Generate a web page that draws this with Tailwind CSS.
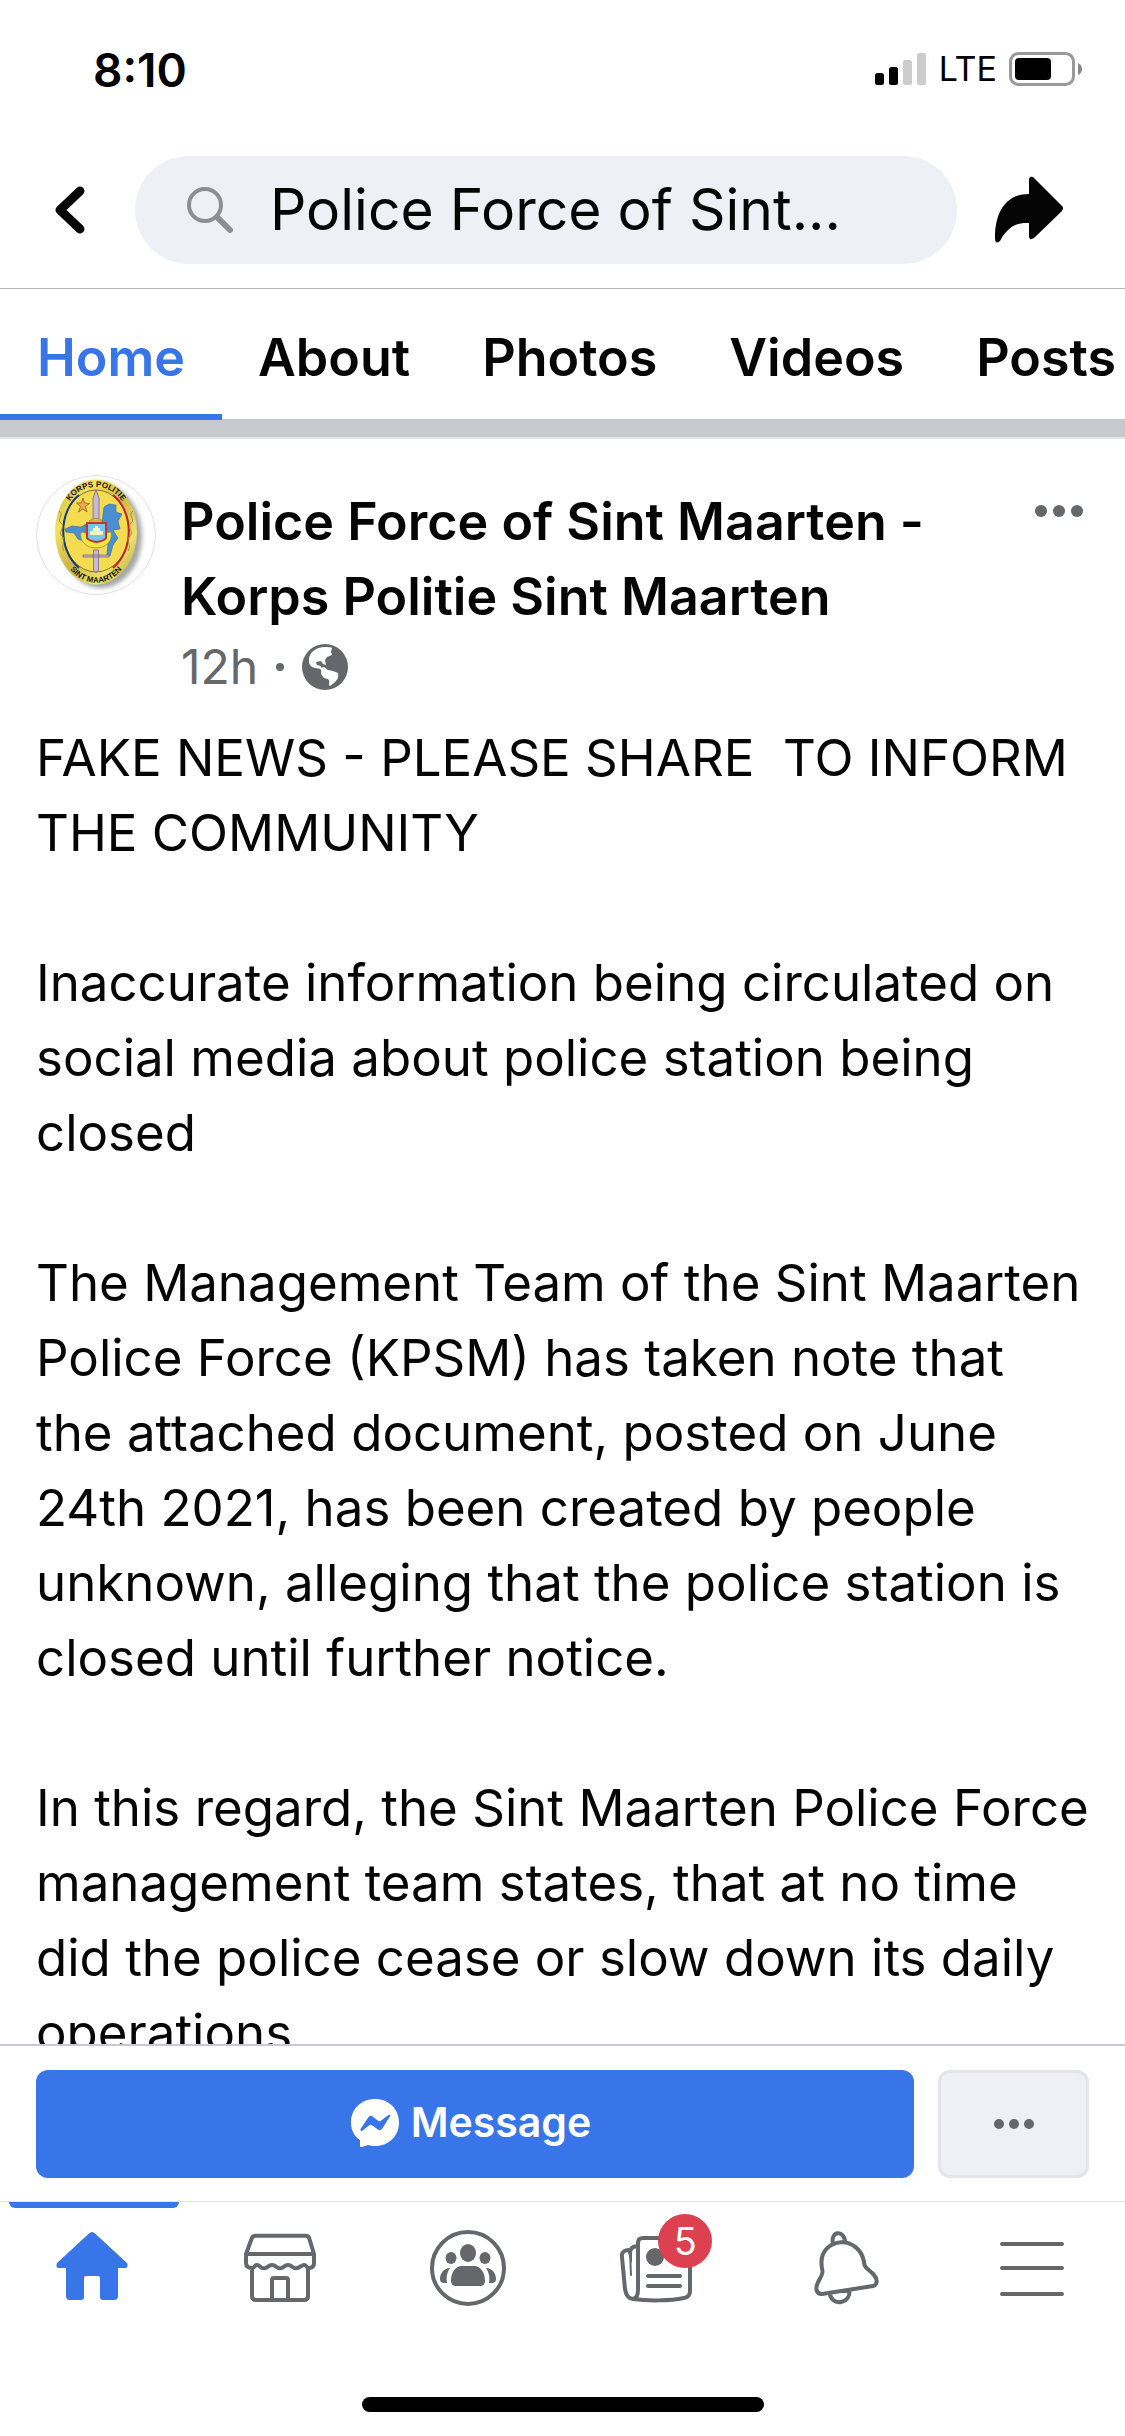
<!DOCTYPE html>
<html lang="en">
<head>
<meta charset="utf-8">
<meta name="viewport" content="width=device-width, initial-scale=1">
<title>Police Force of Sint Maarten</title>
<script src="https://cdn.jsdelivr.net/npm/@tailwindcss/browser@4"></script>
</head>
<body class="flex h-screen flex-col overflow-hidden bg-white font-['Inter',sans-serif] text-[#050505]">

  <!-- Status bar -->
  <div class="flex h-[132px] shrink-0 items-start justify-between pt-10 pr-[42px] pl-[93px] text-black">
    <time class="text-[46px] leading-[60px] font-semibold">8:10</time>
    <div class="flex h-[58px] items-center gap-3">
      <svg class="h-[34px] w-[52px]" viewBox="0 0 52 34" aria-label="Signal strength" role="img">
        <rect x="0" y="21" width="9" height="12" rx="2.5"/><rect x="14" y="15" width="9" height="18" rx="2.5"/>
        <rect x="28" y="8" width="9" height="25" rx="2.5" fill="#ccc"/><rect x="42" y="1" width="9" height="32" rx="2.5" fill="#ccc"/>
      </svg>
      <span class="text-[34px] leading-[60px]">LTE</span>
      <svg class="h-[34px] w-[74px]" viewBox="0 0 74 34" aria-label="Battery" role="img">
        <rect x="1.5" y="1.5" width="63" height="31" rx="8" fill="none" stroke="#999" stroke-width="3"/>
        <rect x="6" y="6" width="36" height="22" rx="4"/><path d="M69 11q4 2 4 6t-4 6z" fill="#888"/>
      </svg>
    </div>
  </div>

  <!-- Search header -->
  <header class="flex shrink-0 items-center border-b border-[#b4b6bb] pt-6 pb-6">
    <button class="flex w-[135px] justify-start pl-[54px]" aria-label="Back">
      <svg class="h-12 w-8" viewBox="0 0 32 48" fill="none" stroke="#050505" stroke-width="9" stroke-linecap="round" stroke-linejoin="round"><path d="M26 5 6 24l20 19"/></svg>
    </button>
    <label class="flex h-[108px] min-w-0 flex-1 items-center gap-9 rounded-full bg-[#eff0f5] pl-[51px]">
      <svg class="h-12 w-12 shrink-0" viewBox="0 0 48 48" fill="none" stroke="#8c8e92"><circle cx="19" cy="19" r="16" stroke-width="4"/><path d="m31 31 13 13" stroke-width="6" stroke-linecap="round"/><path d="m29 30 5 5" stroke-width="4"/></svg>
      <input class="min-w-0 flex-1 bg-transparent text-[57px] leading-[72px] outline-none" type="text" aria-label="Search" value="Police Force of Sint...">
    </label>
    <button class="flex w-[168px] justify-start pl-[38px]" aria-label="Share">
      <svg class="h-[68px] w-[69px]" viewBox="0 0 69 68" fill="#050505"><path d="M34 18V4q0-4 4-3L67 30q2 2 0 5L39 62q-5 3-5-2V47C21 46 12 52 5 65q-5 4-5-3C0 36 11 18 34 18z"/></svg>
    </button>
  </header>

  <!-- Page tabs -->
  <nav class="flex shrink-0 overflow-hidden bg-[#c8c9ce] text-[52px] leading-[66px] font-semibold" aria-label="Page sections">
    <a href="#" class="h-[131px] border-b-6 border-[#3875e8] bg-white px-[37px] pt-9 text-[#3875e8]" aria-current="page">Home</a>
    <a href="#" class="h-[130px] bg-white px-9 pt-9">About</a>
    <a href="#" class="h-[130px] bg-white px-9 pt-9">Photos</a>
    <a href="#" class="h-[130px] bg-white px-9 pt-9">Videos</a>
    <a href="#" class="h-[130px] bg-white px-9 pt-9">Posts</a>
  </nav>
  <div class="h-[19px] shrink-0 border-b-2 border-[#e4e5ea] bg-[#c8c9ce]"></div>

  <!-- Post -->
  <main class="min-h-0 flex-1 overflow-hidden px-9 pt-9">
    <article>
      <div class="flex items-start gap-[25px]">
        <svg class="h-[120px] w-[120px] shrink-0" viewBox="0 0 120 120" role="img" aria-label="Police force crest">
          <defs>
            <linearGradient id="gold" x1="0" y1="0" x2="1" y2="1"><stop offset="0" stop-color="#b9a13c"/><stop offset=".25" stop-color="#f3e25c"/><stop offset=".5" stop-color="#cdb646"/><stop offset=".75" stop-color="#efe16b"/><stop offset="1" stop-color="#a8923a"/></linearGradient>
            <filter id="soft" x="-20%" y="-20%" width="140%" height="140%"><feGaussianBlur stdDeviation="2"/></filter>
            <path id="arcTop" d="M31 33C40 5 80 5 89 33"/>
            <path id="arcBottom" d="M27 80C38 117 82 117 93 80"/>
          </defs>
          <circle cx="60" cy="60" r="59.5" fill="#fff" stroke="#e2e2e4"/>
          <ellipse cx="65" cy="61" rx="41" ry="52" fill="#777" opacity=".65" filter="url(#soft)"/>
          <ellipse cx="60" cy="57" rx="41" ry="52.500" fill="url(#gold)"/>
          <ellipse cx="60" cy="56" rx="33" ry="41" fill="#f4dc50" stroke="#80702c"/>
          <path d="M43 20C22 37 22 75 43 93" fill="none" stroke="#173a78" stroke-width="2"/>
          <path d="M77 20c21 17 21 55 0 73" fill="none" stroke="#c2202c" stroke-width="2"/>
          <path d="M23 36c6 4-3 8 2 12s-4 9 1 13-2 9 2 15M97 36c-6 4 3 8-2 12s4 9-1 13 2 9-2 15" fill="none" stroke="#a39138"/>
          <path d="m68 32 5-3 7 1v7l6 2-4 7 2 8-7 1 5 8-5 7-3 11-3-1 1-13-7-12zM29 54l7-3 9 1 5-3v18l-8-3-4-6-8-1z" fill="#4a8fd2" stroke="#41649a" stroke-width=".6"/>
          <path d="m47 23 1.500 5 5 .5-4 3 1.500 5.500-4-3-4.500 3 2-5.500-4-3.500 5-.2z" fill="#f0a94d" stroke="#7b542a" stroke-width=".7"/>
          <path d="m60 15 3 8v22h-6V23zM57.500 75h5v20q-2.500 4-5 0zM47 80h26v2H47z" fill="#c9b9d8" stroke="#756688" stroke-width=".8"/>
          <path d="M45 57c-2 9 5 16 15 16s17-7 15-16l-5 1c0 5-4 9-10 9s-10-4-10-9z" fill="#f3e642" stroke="#9a8530" stroke-width=".7"/>
          <path d="M53 46q7-5 14 0z" fill="#e8c836" stroke="#8c7626" stroke-width=".6"/>
          <path d="M51 48h19v15q-2 3-9.500 4-7.500-1-9.500-4z" fill="#75c7e5" stroke="#c8342d" stroke-width="2"/>
          <path d="M54 60v-4h3v-3h2v-2h3v2h2v3h3v4z" fill="#f7f2c4"/>
          <g class="font-['Liberation_Sans',sans-serif] text-[8px] font-bold" fill="#17150a">
            <text text-anchor="middle"><textPath href="#arcTop" startOffset="50%">KORPS POLITIE</textPath></text>
            <text text-anchor="middle"><textPath href="#arcBottom" startOffset="50%">SINT MAARTEN</textPath></text>
          </g>
        </svg>
        <div class="min-w-0 flex-1 pt-[9px]">
          <h1 class="text-[52px] leading-[75px] font-semibold">Police Force of Sint Maarten -<br>Korps Politie Sint Maarten</h1>
          <div class="flex h-[66px] items-center text-[48px] leading-[66px] text-[#65676b]">
            <a href="#">12h</a>
            <span class="mx-[18px] size-2 rounded-full bg-[#65676b]"></span>
            <svg class="size-[46px]" viewBox="0 0 46 46" role="img" aria-label="Public"><circle cx="23" cy="23" r="23" fill="#65676b"/><path d="M7 17C6 9 14 3 23 3q6 0 7 1l-1 4 1 3-5 2-2 3 1 5-3-1-2-3-5 1 1 3 4 1v3l-6-1C9 23 7 21 7 17zM18 24l4-1 4 3 5 1 5 2c1 5-1 7-4 10l-4 3-1-1c1-5 0-6-5-7l-3-4q1-3-1-6z" fill="#fff"/></svg>
          </div>
        </div>
        <button class="pt-[30px] pr-1.5" aria-label="Post options">
          <svg class="h-3 w-12" viewBox="0 0 48 12" fill="#65676b"><circle cx="6" cy="6" r="6"/><circle cx="24" cy="6" r="6"/><circle cx="42" cy="6" r="6"/></svg>
        </button>
      </div>
      <div class="mt-5 space-y-[75px] text-[51px] leading-[75px] whitespace-nowrap">
        <p>FAKE NEWS - PLEASE SHARE &nbsp;TO INFORM<br>THE COMMUNITY</p>
        <p>Inaccurate information being circulated on<br>social media about police station being<br>closed</p>
        <p>The Management Team of the Sint Maarten<br>Police Force (KPSM) has taken note that<br>the attached document, posted on June<br>24th 2021, has been created by people<br>unknown, alleging that the police station is<br>closed until further notice.</p>
        <p>In this regard, the Sint Maarten Police Force<br>management team states, that at no time<br>did the police cease or slow down its daily<br>operations</p>
      </div>
    </article>
  </main>

  <!-- Page actions -->
  <div class="flex shrink-0 gap-6 border-t-2 border-[#c9cad1] bg-white px-9 pt-6 pb-[23px]">
    <button class="flex h-[108px] flex-1 items-center justify-center gap-3 rounded-xl bg-[#3875e8] pr-2 pb-0.5 text-[41px] font-semibold text-white">
      <svg class="size-12" viewBox="0 0 48 48" aria-hidden="true"><path d="M24 0c14 0 24 10 24 23.500S38 47 24 47q-4 0-7-1l-6 2q-2 1-2-2v-5C3 37 0 31 0 23.500 0 10 10 0 24 0z" fill="#fff"/><path d="m9.500 30 8-12q2-2 4-.5l6 4.500q1 .6 2 0l8-6q2-.6 1.500 1.300L31 30q-2 2-4 .5L20.500 26q-1-.5-2 0l-7.500 6q-2 .3-1.500-2z" fill="#3875e8"/></svg>
      Message
    </button>
    <button class="flex h-[108px] w-[151px] items-center justify-center rounded-xl border-3 border-[#e4e5ea] bg-[#eff0f5]" aria-label="More actions">
      <svg class="h-[10px] w-10" viewBox="0 0 40 10" fill="#65676b"><circle cx="5" cy="5" r="5"/><circle cx="20" cy="5" r="5"/><circle cx="35" cy="5" r="5"/></svg>
    </button>
  </div>

  <!-- Bottom navigation -->
  <nav class="grid shrink-0 grid-cols-6 border-t border-[#e2e3e6] bg-white" aria-label="Main">
    <a href="#" class="flex flex-col items-center" aria-current="page" aria-label="Home">
      <span class="h-1.5 w-[170px] rounded-b-md bg-[#3875e8]"></span>
      <svg class="mt-[18px] size-[84px]" viewBox="0 0 84 84" fill="#3875e8"><path d="M37 7.500q3-3 6 0L75 37q2 5-3 5h-6v28q0 4-4 4H51q-3 0-3-3V52q0-2-2-2H34q-2 0-2 2v19q0 3-3 3H18q-4 0-4-4V42H8q-5 0-3-5z"/></svg>
    </a>
    <a href="#" class="flex justify-center pt-6" aria-label="Marketplace">
      <svg class="size-[84px]" viewBox="0 0 84 84" fill="none" stroke="#65676b" stroke-width="4" stroke-linejoin="round"><path d="M17 9.700h50q2 0 3 2l5 16.300v9q0 5-5 5c-3 0-2-3-5-3s-4 3.300-8 3.300-4-3.300-8-3.300-4 3.300-8 3.300-4-3.300-8-3.300-4 3.300-8 3.300-4-3.300-7-3.300-2 3-5 3q-6 0-6-5v-9l6-16.300q1-2 4-2zM7 28h68M13 42v28q0 4 4 4h48q4 0 4-4V42M33 74V54q0-2 2-2h12q2 0 2 2v20"/></svg>
    </a>
    <a href="#" class="flex justify-center pt-6" aria-label="Groups">
      <svg class="size-[84px]" viewBox="0 0 84 84" fill="#65676b"><circle cx="41" cy="42" r="36" fill="none" stroke="#65676b" stroke-width="4"/><ellipse cx="41" cy="27" rx="8" ry="9"/><ellipse cx="24" cy="32" rx="5.500" ry="6"/><ellipse cx="58" cy="32" rx="5.500" ry="6"/><path d="M35 40h12c7 0 11 7 11 15q0 5-5 5H29q-5 0-5-5c0-8 4-15 11-15zM23 42c-3 5-4 9-3 15h-3q-4 0-4-4c0-6 4-11 10-11zM59 42c3 5 4 9 3 15h3q4 0 4-4c0-6-4-11-10-11z"/></svg>
    </a>
    <a href="#" class="flex justify-center pt-6" aria-label="News, 5 new">
      <span class="relative size-[84px]">
        <svg class="size-[84px]" viewBox="0 0 84 84" fill="none" stroke="#65676b" stroke-width="4" stroke-linecap="round" stroke-linejoin="round"><path d="M24 64V17q0-5 5-5h42q5 0 5 5v48q0 6-6 7c-14 3-37 3-51 1M24 64q0 8-5 9c-6-1-7-5-8-10L8 31q-1-6 6-7M23 20q-7 1-7 7"/><path d="m16 27 1 22" stroke-width="2"/><path d="m14 25 4 1v12z" fill="#65676b" stroke="none"/><circle cx="41" cy="31" r="9" fill="#65676b" stroke="none"/><path d="M34 50h32M34 60h32"/></svg>
        <span class="absolute -top-3 left-11 flex size-[54px] items-center justify-center rounded-full bg-[#dd404e] text-[38px] leading-none text-white">5</span>
      </span>
    </a>
    <a href="#" class="flex justify-center pt-6" aria-label="Notifications">
      <svg class="size-[84px]" viewBox="0 0 84 84" fill="none" stroke="#65676b" stroke-width="4" stroke-linejoin="round"><path d="M31 18c-3-14 12-14 12-2M19.500 37C19 25 28 17 39 16.300S60 24 62 36q0 4 3 6.500c5 4 10 8 9.700 13q-.5 4-3.700 4.500L20 68q-4 .5-5.500-4C13 57 21 51 20.500 45q-1-4-1-8zM28 67c0 6 5 10 11 9s9-6 8.500-12"/></svg>
    </a>
    <a href="#" class="flex justify-center pt-6" aria-label="Menu">
      <svg class="size-[84px]" viewBox="0 0 84 84" stroke="#65676b" stroke-width="4" stroke-linecap="round"><path d="M13 18h60M13 42h60M13 68h60"/></svg>
    </a>
  </nav>
  <div class="flex h-[126px] shrink-0 items-end justify-center pb-6">
    <div class="h-[15px] w-[402px] rounded-full bg-black"></div>
  </div>
</body>
</html>
